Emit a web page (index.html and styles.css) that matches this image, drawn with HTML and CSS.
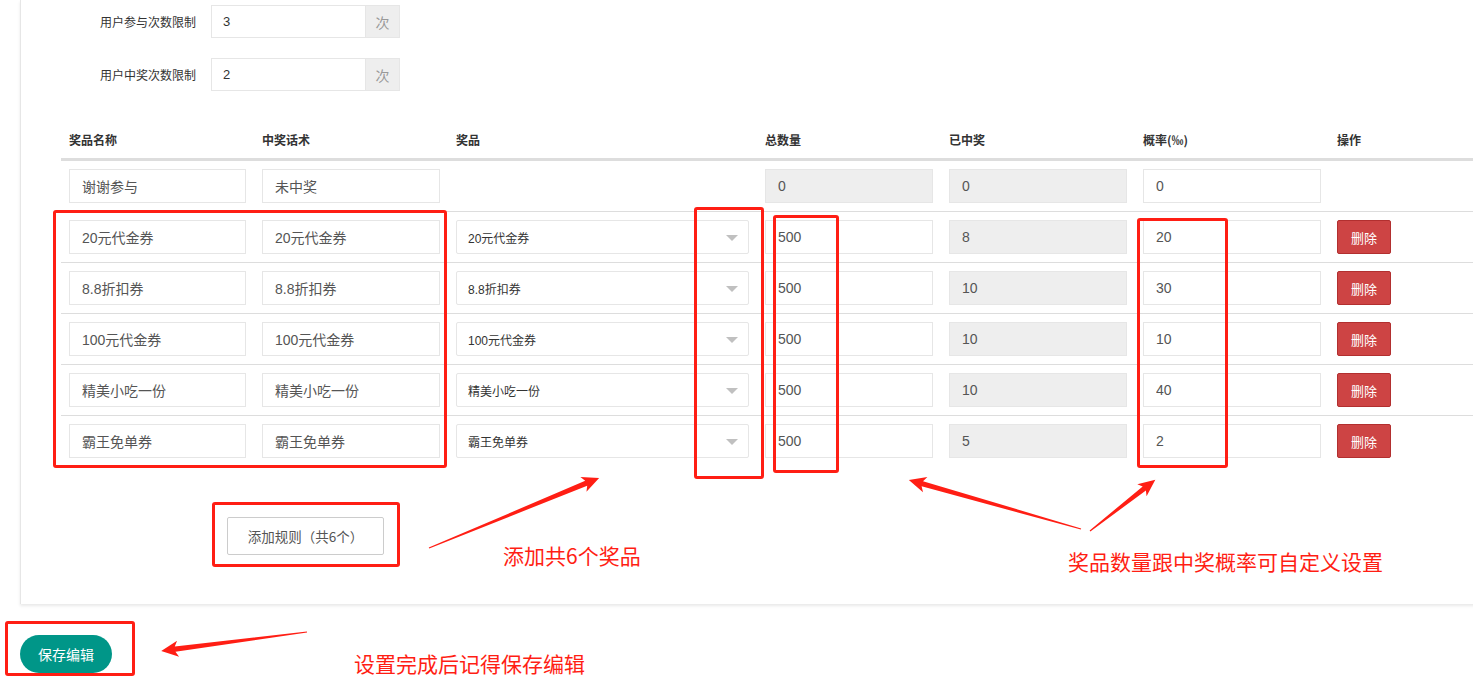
FILE: index.html
```html
<!DOCTYPE html>
<html lang="zh-CN">
<head>
<meta charset="utf-8">
<title>奖品设置</title>
<link rel="stylesheet" href="styles.css">
</head>
<body>
<div class="page">
  <div class="panel">
    <div class="form-row">
      <label class="form-label">用户参与次数限制</label>
      <div class="input-group">
        <input class="form-input" value="3">
        <span class="addon">次</span>
      </div>
    </div>
    <div class="form-row">
      <label class="form-label">用户中奖次数限制</label>
      <div class="input-group">
        <input class="form-input" value="2">
        <span class="addon">次</span>
      </div>
    </div>

    <table class="prize-table">
      <colgroup>
        <col class="c-name"><col class="c-talk"><col class="c-prize"><col class="c-total"><col class="c-won"><col class="c-rate"><col class="c-op">
      </colgroup>
      <thead>
        <tr><th>奖品名称</th><th>中奖话术</th><th>奖品</th><th>总数量</th><th>已中奖</th><th>概率(‰)</th><th>操作</th></tr>
      </thead>
      <tbody>
        <tr>
          <td><input class="cell-input" value="谢谢参与"></td>
          <td><input class="cell-input" value="未中奖"></td>
          <td></td>
          <td><input class="cell-input ro" value="0" readonly></td>
          <td><input class="cell-input ro" value="0" readonly></td>
          <td><input class="cell-input" value="0"></td>
          <td></td>
        </tr>
        <tr>
          <td><input class="cell-input" value="20元代金券"></td>
          <td><input class="cell-input" value="20元代金券"></td>
          <td><div class="select">20元代金券</div></td>
          <td><input class="cell-input" value="500"></td>
          <td><input class="cell-input ro" value="8" readonly></td>
          <td><input class="cell-input" value="20"></td>
          <td><button class="btn-del">删除</button></td>
        </tr>
        <tr>
          <td><input class="cell-input" value="8.8折扣券"></td>
          <td><input class="cell-input" value="8.8折扣券"></td>
          <td><div class="select">8.8折扣券</div></td>
          <td><input class="cell-input" value="500"></td>
          <td><input class="cell-input ro" value="10" readonly></td>
          <td><input class="cell-input" value="30"></td>
          <td><button class="btn-del">删除</button></td>
        </tr>
        <tr>
          <td><input class="cell-input" value="100元代金券"></td>
          <td><input class="cell-input" value="100元代金券"></td>
          <td><div class="select">100元代金券</div></td>
          <td><input class="cell-input" value="500"></td>
          <td><input class="cell-input ro" value="10" readonly></td>
          <td><input class="cell-input" value="10"></td>
          <td><button class="btn-del">删除</button></td>
        </tr>
        <tr>
          <td><input class="cell-input" value="精美小吃一份"></td>
          <td><input class="cell-input" value="精美小吃一份"></td>
          <td><div class="select">精美小吃一份</div></td>
          <td><input class="cell-input" value="500"></td>
          <td><input class="cell-input ro" value="10" readonly></td>
          <td><input class="cell-input" value="40"></td>
          <td><button class="btn-del">删除</button></td>
        </tr>
        <tr>
          <td><input class="cell-input" value="霸王免单券"></td>
          <td><input class="cell-input" value="霸王免单券"></td>
          <td><div class="select">霸王免单券</div></td>
          <td><input class="cell-input" value="500"></td>
          <td><input class="cell-input ro" value="5" readonly></td>
          <td><input class="cell-input" value="2"></td>
          <td><button class="btn-del">删除</button></td>
        </tr>
      </tbody>
    </table>

    <div class="add-wrap">
      <button class="btn-add">添加规则（共6个）</button>
    </div>
  </div>

  <div class="footer">
    <button class="btn-save">保存编辑</button>
  </div>

  <!-- annotation overlay -->
  <div class="mark mark-1"></div>
  <div class="mark mark-2"></div>
  <div class="mark mark-3"></div>
  <div class="mark mark-4"></div>
  <div class="mark mark-5"></div>
  <div class="mark mark-6"></div>

  <svg class="arrows" width="1473" height="697" viewBox="0 0 1473 697" xmlns="http://www.w3.org/2000/svg">
    <g fill="#ff1e14">
      <g transform="translate(429,548) rotate(-22.38)">
        <polygon points="0,-0.6 170,-2.6 167,-8 184,0 167,8 170,2.6 0,0.6"/>
      </g>
      <g transform="translate(1081,529) rotate(-164.1)">
        <polygon points="0,-0.6 165,-2.6 162,-8 179,0 162,8 165,2.6 0,0.6"/>
      </g>
      <g transform="translate(1090,531) rotate(-38.1)">
        <polygon points="0,-0.6 69,-2.6 66,-7.5 83,0 66,7.5 69,2.6 0,0.6"/>
      </g>
      <g transform="translate(307,632) rotate(172.6)">
        <polygon points="0,-0.6 133,-2.6 130,-8 147,0 130,8 133,2.6 0,0.6"/>
      </g>
    </g>
  </svg>

  <div class="note note-1">添加共6个奖品</div>
  <div class="note note-2">奖品数量跟中奖概率可自定义设置</div>
  <div class="note note-3">设置完成后记得保存编辑</div>
</div>
</body>
</html>
```

FILE: styles.css
```css
html, body {
  margin: 0;
  padding: 0;
  background: #ffffff;
  overflow: hidden;
}

body {
  font-family: "Liberation Sans", "Noto Sans CJK SC", sans-serif;
  color: #333;
  width: 1473px;
  height: 697px;
}

.page {
  position: relative;
  width: 1473px;
  height: 697px;
}

/* ---------- panel ---------- */
.panel {
  margin-left: 20px;
  width: 1480px;
  padding: 5px 0 49px 0;
  background: #fff;
  border-left: 1px solid #e6e6e6;
  box-shadow: 0 2px 3px rgba(0, 0, 0, 0.09);
}

.form-row {
  display: flex;
  align-items: center;
  height: 33px;
  margin-bottom: 20px;
}

.form-label {
  width: 175px;
  padding-right: 15px;
  text-align: right;
  font-size: 12px;
  color: #333;
  font-family: "Noto Sans CJK SC", sans-serif;
}

.input-group {
  display: flex;
  height: 33px;
}

.form-input {
  box-sizing: border-box;
  width: 154px;
  height: 33px;
  border: 1px solid #e6e6e6;
  border-right: none;
  padding: 0 0 0 11px;
  font-family: "Liberation Sans", "Noto Sans CJK SC", sans-serif;
  font-size: 13px;
  color: #333;
  outline: none;
  background: #fff;
}

.addon {
  box-sizing: border-box;
  width: 35px;
  height: 33px;
  display: flex;
  align-items: center;
  justify-content: center;
  background: #eeeeee;
  border: 1px solid #e6e6e6;
  color: #999;
  font-size: 14px;
  font-family: "Noto Sans CJK SC", sans-serif;
}

/* ---------- table ---------- */
.prize-table {
  margin: 31px 0 0 40px;
  width: 1500px;
  table-layout: fixed;
  border-collapse: separate;
  border-spacing: 0;
}

.c-name { width: 193px; }
.c-talk { width: 194px; }
.c-prize { width: 309px; }
.c-total { width: 184px; }
.c-won { width: 194px; }
.c-rate { width: 194px; }
.c-op { width: 232px; }

.prize-table th {
  text-align: left;
  padding: 8px;
  line-height: 20px;
  font-size: 12px;
  font-weight: bold;
  color: #333;
  font-family: "Noto Sans CJK SC", sans-serif;
  border-bottom: 2px solid #dddddd;
}

.prize-table td {
  padding: 8px;
  height: 34px;
  border-top: 1px solid #dddddd;
  vertical-align: middle;
}

.cell-input {
  box-sizing: border-box;
  display: block;
  width: 100%;
  height: 34px;
  border: 1px solid #e6e6e6;
  padding: 0 0 0 12px;
  font-family: "Liberation Sans", "Noto Sans CJK SC", sans-serif;
  font-size: 14px;
  color: #555;
  background: #fff;
  outline: none;
}

.cell-input.ro {
  background: #eeeeee;
}

.select {
  position: relative;
  box-sizing: border-box;
  height: 34px;
  border: 1px solid #e6e6e6;
  border-radius: 2px;
  padding-left: 11px;
  display: flex;
  align-items: center;
  font-size: 12px;
  color: #333;
  font-family: "Liberation Sans", "Noto Sans CJK SC", sans-serif;
  background: #fff;
}

.select::after {
  content: "";
  position: absolute;
  right: 10px;
  top: 14px;
  width: 0;
  height: 0;
  border-left: 6px solid transparent;
  border-right: 6px solid transparent;
  border-top: 6px solid #c0c0c0;
}

.btn-del {
  box-sizing: border-box;
  width: 54px;
  height: 34px;
  background: #cd4444;
  border: 1px solid #b22f2f;
  border-radius: 2px;
  color: #fff;
  font-size: 13px;
  font-family: "Noto Sans CJK SC", sans-serif;
  padding: 0;
}

/* ---------- add / save ---------- */
.add-wrap {
  margin: 51px 0 0 206px;
}

.btn-add {
  box-sizing: border-box;
  width: 157px;
  height: 38px;
  background: #fff;
  border: 1px solid #cccccc;
  border-radius: 2px;
  color: #555;
  font-size: 13.5px;
  font-family: "Noto Sans CJK SC", sans-serif;
  padding: 0;
}

.footer {
  margin: 31px 0 0 20px;
}

.btn-save {
  box-sizing: border-box;
  width: 92px;
  height: 38px;
  border: none;
  border-radius: 19px;
  background: #009688;
  color: #fff;
  font-size: 14px;
  font-family: "Noto Sans CJK SC", sans-serif;
  padding: 0;
}

/* ---------- annotations (overlay) ---------- */
.mark {
  position: absolute;
  box-sizing: border-box;
  border: 3px solid #ff1e14;
  border-radius: 3px;
}

.mark-1 { left: 53px; top: 210px; width: 394px; height: 258px; }
.mark-2 { left: 694px; top: 207px; width: 70px; height: 272px; }
.mark-3 { left: 773px; top: 215px; width: 66px; height: 258px; }
.mark-4 { left: 1137px; top: 218px; width: 91px; height: 250px; }
.mark-5 { left: 212px; top: 502px; width: 188px; height: 65px; }
.mark-6 { left: 5px; top: 621px; width: 130px; height: 55px; }

.arrows {
  position: absolute;
  left: 0;
  top: 0;
  pointer-events: none;
}

.note {
  position: absolute;
  color: #ff1e14;
  font-family: "Noto Sans CJK SC", sans-serif;
  white-space: nowrap;
  line-height: 1;
}

.note-1 { left: 503px; top: 545px; font-size: 21px; }
.note-2 { left: 1068px; top: 551px; font-size: 21px; }
.note-3 { left: 354px; top: 653px; font-size: 21px; }
```
